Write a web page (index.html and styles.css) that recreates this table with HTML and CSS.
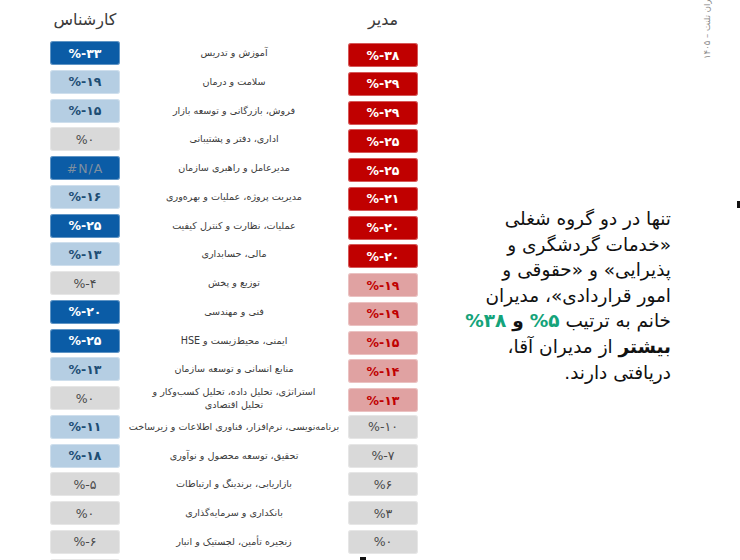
FILE: index.html
```html
<!DOCTYPE html>
<html lang="fa">
<head>
<meta charset="utf-8">
<link rel="stylesheet" href="styles.css">
</head>
<body>
<div class="page">
  <section class="table">
    <div class="head">
      <div class="hcell">کارشناس</div>
      <div></div>
      <div class="hcell">مدیر</div>
    </div>
    <div class="grid">
      <div class="box dark">%-۳۳</div><div class="label">آموزش و تدریس</div><div class="box red">%-۳۸</div>
      <div class="box light">%-۱۹</div><div class="label">سلامت و درمان</div><div class="box red">%-۲۹</div>
      <div class="box light">%-۱۵</div><div class="label">فروش، بازرگانی و توسعه بازار</div><div class="box red">%-۲۹</div>
      <div class="box gray">%۰</div><div class="label">اداری، دفتر و پشتیبانی</div><div class="box red">%-۲۵</div>
      <div class="box dark na">#N/A</div><div class="label">مدیرعامل و راهبری سازمان</div><div class="box red">%-۲۵</div>
      <div class="box light">%-۱۶</div><div class="label">مدیریت پروژه، عملیات و بهره‌وری</div><div class="box red">%-۲۱</div>
      <div class="box dark">%-۲۵</div><div class="label">عملیات، نظارت و کنترل کیفیت</div><div class="box red">%-۲۰</div>
      <div class="box light">%-۱۳</div><div class="label">مالی، حسابداری</div><div class="box red">%-۲۰</div>
      <div class="box gray">%-۴</div><div class="label">توزیع و پخش</div><div class="box pink">%-۱۹</div>
      <div class="box dark">%-۲۰</div><div class="label">فنی و مهندسی</div><div class="box pink">%-۱۹</div>
      <div class="box dark">%-۲۵</div><div class="label">ایمنی، محیط‌زیست و HSE</div><div class="box pink">%-۱۵</div>
      <div class="box light">%-۱۳</div><div class="label">منابع انسانی و توسعه سازمان</div><div class="box pink">%-۱۴</div>
      <div class="box gray">%۰</div><div class="label two">استراتژی، تحلیل داده، تحلیل کسب‌وکار و<br>تحلیل اقتصادی</div><div class="box pink">%-۱۳</div>
      <div class="box light">%-۱۱</div><div class="label">برنامه‌نویسی، نرم‌افزار، فناوری اطلاعات و زیرساخت</div><div class="box gray">%-۱۰</div>
      <div class="box light">%-۱۸</div><div class="label">تحقیق، توسعه محصول و نوآوری</div><div class="box gray">%-۷</div>
      <div class="box gray">%-۵</div><div class="label">بازاریابی، برندینگ و ارتباطات</div><div class="box gray">%۶</div>
      <div class="box gray">%۰</div><div class="label">بانکداری و سرمایه‌گذاری</div><div class="box gray">%۳</div>
      <div class="box gray">%-۶</div><div class="label">زنجیره تأمین، لجستیک و انبار</div><div class="box gray">%۰</div>
      <div class="box gray"></div><div class="label"></div><div></div>
    </div>
  </section>
  <section class="note">
    <p class="note-text">تنها در دو گروه شغلی<br>«خدمات گردشگری و<br>پذیرایی» و «حقوقی و<br>امور قراردادی»، مدیران<br>خانم به ترتیب <b class="green">۵%</b> <b>و</b> <b class="green">۳۸%</b><br><b>بیشتر</b> از مدیران آقا،<br>دریافتی دارند.</p>
  </section>
</div>
<div class="credit">© ایران تلنت – ۱۴۰۵</div>
<div class="mark mark-a"></div>
<div class="mark mark-b"></div>
</body>
</html>
```
FILE: styles.css
```css
html, body {
  margin: 0;
  padding: 0;
  background: #ffffff;
}
body {
  width: 740px;
  height: 560px;
  overflow: hidden;
  position: relative;
  font-family: "DejaVu Sans", "Noto Sans", sans-serif;
  color: #333;
}
.page {
  display: flex;
  direction: ltr;
}
.table {
  width: 430px;
  padding-left: 50px;
  box-sizing: border-box;
}
.head {
  display: grid;
  grid-template-columns: 70px 228px 70px;
  height: 41px;
  align-items: center;
}
.hcell {
  text-align: center;
  font-size: 16px;
  color: #3a3a3a;
  padding-bottom: 2px;
  direction: rtl;
}
.grid {
  display: grid;
  grid-template-columns: 70px 228px 70px;
  grid-auto-rows: 24px;
  row-gap: 4.76px;
}
.box {
  border-radius: 3px;
  display: flex;
  align-items: center;
  justify-content: center;
  font-size: 12.5px;
  font-weight: bold;
  direction: ltr;
  unicode-bidi: bidi-override;
  box-shadow: inset 0 0 0 1px rgba(255,255,255,0.35);
}
.box.red, .box.pink { margin-top: 2px; margin-bottom: -2px; }
.dark { background: #0b5ca6; color: #ffffff; }
.light { background: #b5cee3; color: #1d4d74; }
.gray { background: #d9d9d9; color: #4a4a4a; font-weight: normal; }
.red { background: #c00000; color: #ffffff; }
.pink { background: #e0a2a2; color: #c00000; }
.na { color: #7e8fa0; font-weight: normal; letter-spacing: 1px; }
.label {
  direction: rtl;
  text-align: center;
  font-size: 9.6px;
  color: #3a3a3a;
  display: flex;
  align-items: center;
  justify-content: center;
  white-space: nowrap;
  margin-top: -1px;
}
.label.two {
  line-height: 13px;
  white-space: normal;
}
.note {
  flex: 1;
  display: flex;
  justify-content: flex-end;
  padding-right: 69px;
  padding-top: 206px;
}
.note-text {
  margin: 0;
  direction: rtl;
  text-align: right;
  font-size: 18.5px;
  line-height: 25.6px;
  color: #111;
  white-space: nowrap;
}
.note-text b { font-weight: bold; }
.green { color: #14a37a; letter-spacing: 1px; }
.credit {
  position: absolute;
  left: 702px;
  top: 59px;
  transform-origin: left top;
  transform: rotate(-90deg);
  font-size: 8.5px;
  line-height: 11px;
  color: #8a8a8a;
  white-space: nowrap;
  direction: rtl;
}
.mark {
  position: absolute;
  background: #111;
}
.mark-a { left: 737px; top: 201px; width: 3px; height: 7px; }
.mark-b { left: 360px; top: 557px; width: 6px; height: 3px; }
```
